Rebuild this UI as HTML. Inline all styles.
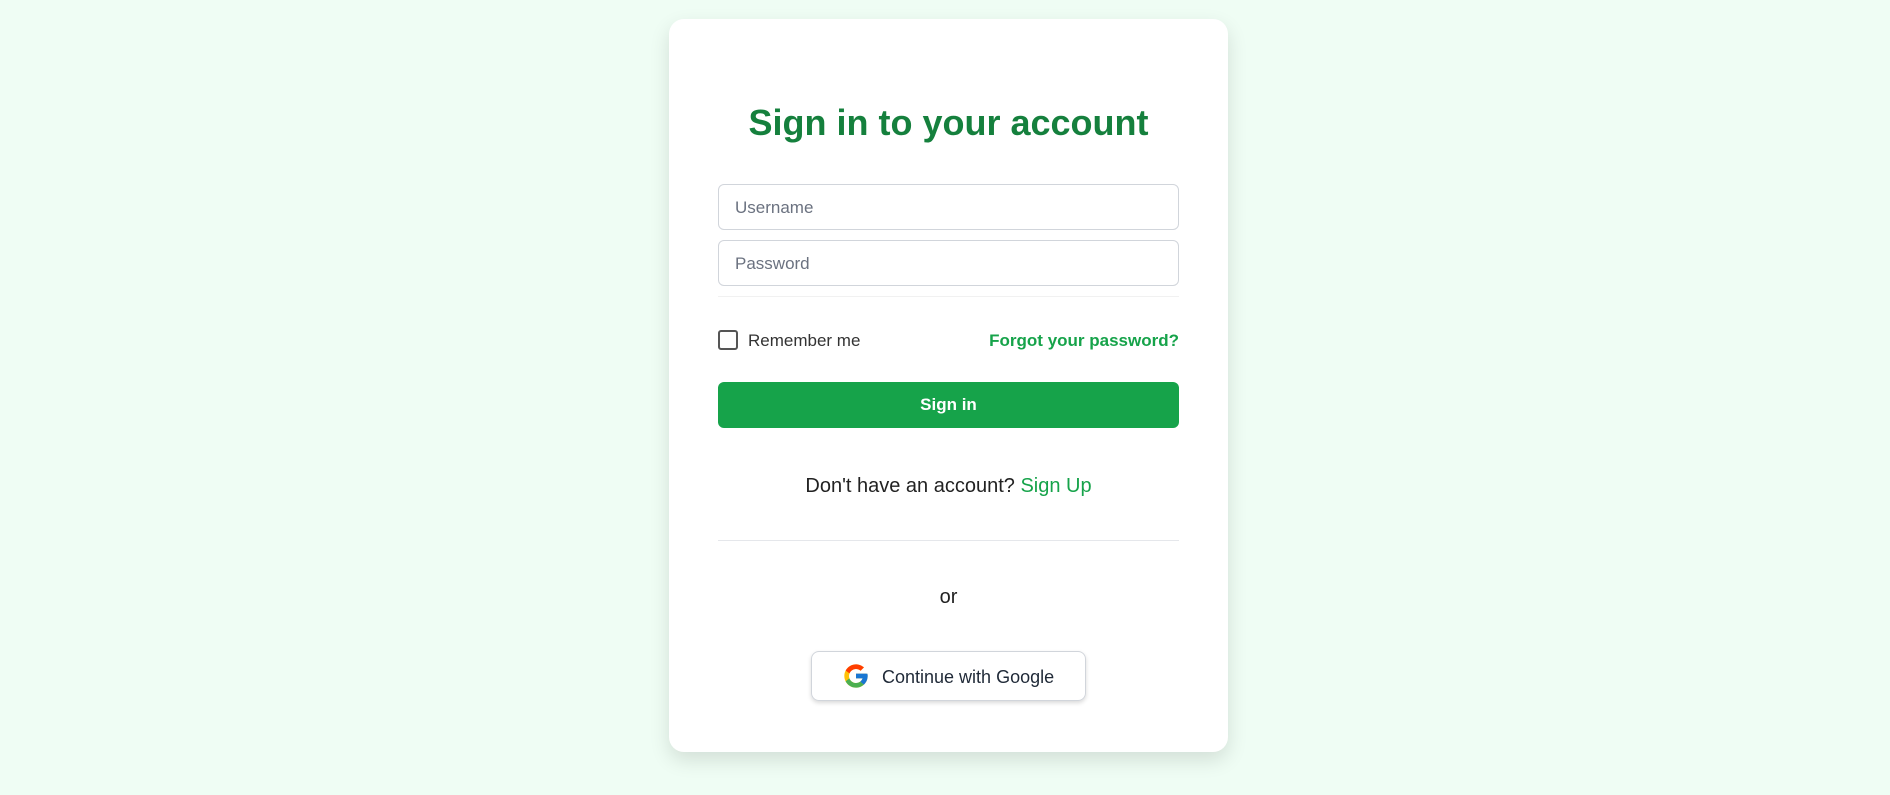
<!DOCTYPE html>
<html><head><style>
*{box-sizing:border-box;margin:0;padding:0}
body{width:1890px;height:795px;background:#effdf4;font-family:"Liberation Sans",sans-serif;position:relative;overflow:hidden}
.card{position:absolute;left:669px;top:19px;width:559px;height:733px;background:#fff;border-radius:15px;box-shadow:0 8px 20px rgba(0,0,0,.12)}
.abs{position:absolute}
h1{position:absolute;left:0;right:0;top:82px;text-align:center;font-size:36px;font-weight:bold;color:#15803d;line-height:44px}
.inp{position:absolute;left:49px;width:461px;height:46px;border:1px solid #d1d5db;border-radius:6px;font-size:17px;color:#6b7280;padding-left:16px;line-height:46px}
.btn{position:absolute;left:49px;top:363px;width:461px;height:46px;background:#16a34a;border-radius:6px;color:#fff;font-weight:bold;font-size:17px;text-align:center;line-height:46px}
</style></head><body>
<div class="card">
<h1>Sign in to your account</h1>
<div class="inp" style="top:165px">Username</div>
<div class="inp" style="top:221px">Password</div>
<div class="abs" style="left:49px;top:277px;width:461px;height:1px;background:#f1f1f1"></div>
<div class="abs" style="left:49px;top:311px;width:20px;height:20px;border:2px solid #555;border-radius:3px"></div>
<div class="abs" style="left:79px;top:311px;font-size:17px;color:#333;line-height:22px">Remember me</div>
<div class="abs" style="right:49px;top:311px;font-size:17px;color:#16a34a;font-weight:bold;line-height:22px">Forgot your password?</div>
<div class="btn">Sign in</div>
<div class="abs" style="left:0;right:0;top:455px;text-align:center;font-size:20px;color:#222;line-height:24px">Don't have an account? <span style="color:#16a34a">Sign Up</span></div>
<div class="abs" style="left:49px;top:521px;width:461px;height:1px;background:#e5e7eb"></div>
<div class="abs" style="left:0;right:0;top:566px;text-align:center;font-size:20px;color:#222;line-height:24px">or</div>
<div class="abs" style="left:142px;top:632px;width:275px;height:50px;border:1px solid #d1d5db;border-radius:8px;box-shadow:0 2px 4px rgba(0,0,0,.15)">
<svg class="abs" style="left:30px;top:10px" width="28" height="28" viewBox="0 0 48 48"><path fill="#FFC107" d="M43.6 20.1H42V20H24v8h11.3C33.7 32.7 29.2 36 24 36c-6.6 0-12-5.4-12-12s5.4-12 12-12c3.1 0 5.8 1.2 7.9 3l5.7-5.7C34 6.1 29.300 4 24 4 12.9 4 4 12.9 4 24s8.9 20 20 20 20-8.9 20-20c0-1.3-.1-2.6-.4-3.9z"/><path fill="#FF3D00" d="M6.3 14.7l6.6 4.8C14.7 15.1 19 12 24 12c3.1 0 5.8 1.2 7.9 3l5.7-5.7C34 6.1 29.3 4 24 4 16.3 4 9.7 8.3 6.3 14.7z"/><path fill="#4CAF50" d="M24 44c5.2 0 9.9-2 13.4-5.2l-6.2-5.2C29.2 35.1 26.7 36 24 36c-5.2 0-9.6-3.3-11.3-8l-6.5 5C9.5 39.6 16.2 44 24 44z"/><path fill="#1976D2" d="M43.6 20.1H42V20H24v8h11.3c-.8 2.2-2.2 4.2-4.1 5.6l6.2 5.2C37 39.2 44 34 44 24c0-1.3-.1-2.6-.4-3.9z"/></svg>
<div class="abs" style="left:70px;top:14px;font-size:18px;color:#1f2937;line-height:22px">Continue with Google</div>
</div>
</div>
</body></html>
